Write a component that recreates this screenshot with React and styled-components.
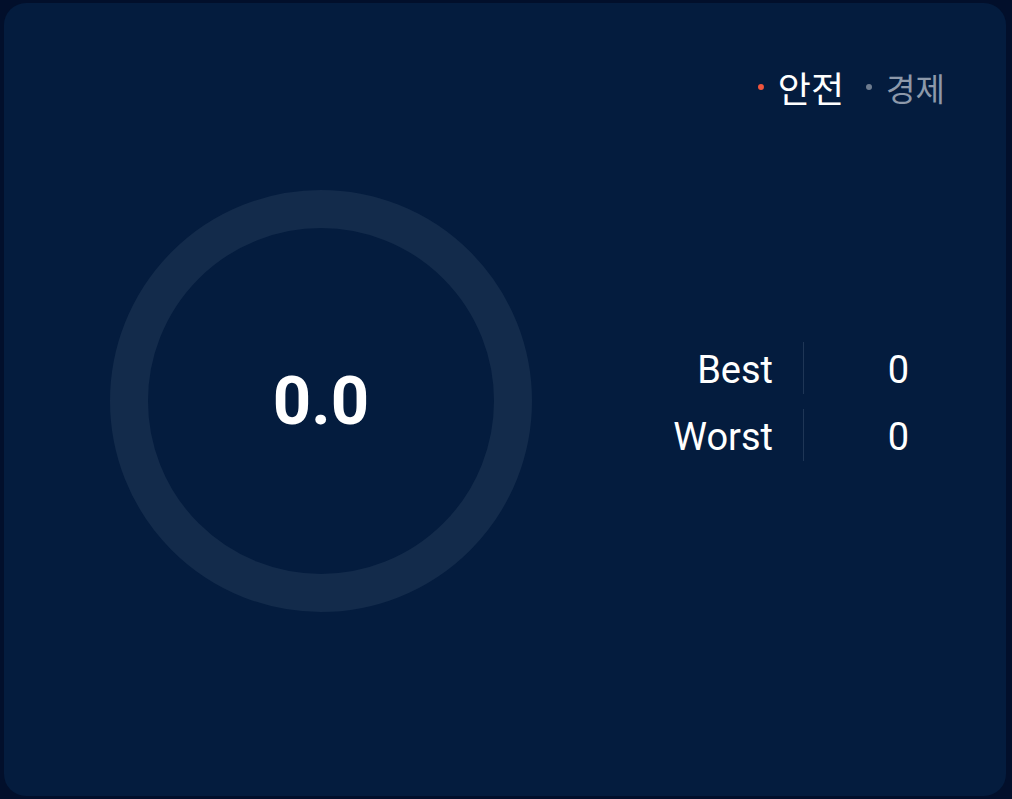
import styled, { createGlobalStyle } from 'styled-components';

const GlobalStyle = createGlobalStyle`
  html, body {
    margin: 0;
    background: #020f2b;
  }
  body {
    font-family: Roboto, "Noto Sans CJK KR", sans-serif;
  }
`;

const Screen = styled.div`
  padding: 3px 6px 3px 4px;
  height: 799px;
  box-sizing: border-box;
`;

const Card = styled.section`
  height: 100%;
  box-sizing: border-box;
  background: #041c3e;
  border-radius: 22px;
  display: flex;
  flex-direction: column;
  padding: 64px 61px 0 106px;
`;

const Legend = styled.div`
  display: flex;
  justify-content: flex-end;
  align-items: center;
  gap: 22px;
  height: 40px;
`;

const LegendItem = styled.div`
  display: flex;
  align-items: center;
  gap: 14px;
  font-family: "Noto Sans CJK KR", Roboto, sans-serif;
  font-size: ${({ $active }) => ($active ? '36px' : '32px')};
  font-weight: 400;
  color: ${({ $active }) => ($active ? '#ffffff' : '#8d99aa')};
`;

const Dot = styled.span`
  width: 6px;
  height: 6px;
  border-radius: 50%;
  background: ${({ $color }) => $color};
`;

const Body = styled.div`
  display: flex;
  align-items: center;
  margin-top: 83px;
  padding-right: 36px;
`;

const Gauge = styled.div`
  position: relative;
  width: 422px;
  height: 422px;
  flex-shrink: 0;
`;

const GaugeValue = styled.div`
  position: absolute;
  inset: 0;
  display: flex;
  align-items: center;
  justify-content: center;
  color: #ffffff;
  font-size: 67px;
  font-weight: 700;
`;

const Stats = styled.div`
  margin-left: auto;
  display: grid;
  grid-template-columns: auto 1px 75px;
  column-gap: 30px;
  row-gap: 15px;
  align-items: center;
`;

const Label = styled.span`
  text-align: right;
  color: #ffffff;
  font-size: 38px;
  line-height: 47px;
  padding-top: 5px;
`;

const Divider = styled.span`
  width: 1px;
  height: 52px;
  background: #1f3656;
`;

const Value = styled(Label)``;

const stats = [
  { label: 'Best', value: 0 },
  { label: 'Worst', value: 0 },
];

export default function App() {
  return (
    <>
      <GlobalStyle />
      <Screen>
        <Card>
          <Legend>
            <LegendItem $active>
              <Dot $color="#f0553d" />
              안전
            </LegendItem>
            <LegendItem>
              <Dot $color="#6e7c8f" />
              경제
            </LegendItem>
          </Legend>
          <Body>
            <Gauge>
              <svg width="422" height="422" viewBox="0 0 422 422">
                <circle cx="211" cy="211" r="192" fill="none" stroke="#132b4b" strokeWidth="38" />
              </svg>
              <GaugeValue>0.0</GaugeValue>
            </Gauge>
            <Stats>
              {stats.flatMap((s) => [
                <Label key={`${s.label}-l`}>{s.label}</Label>,
                <Divider key={`${s.label}-d`} />,
                <Value key={`${s.label}-v`}>{s.value}</Value>,
              ])}
            </Stats>
          </Body>
        </Card>
      </Screen>
    </>
  );
}
